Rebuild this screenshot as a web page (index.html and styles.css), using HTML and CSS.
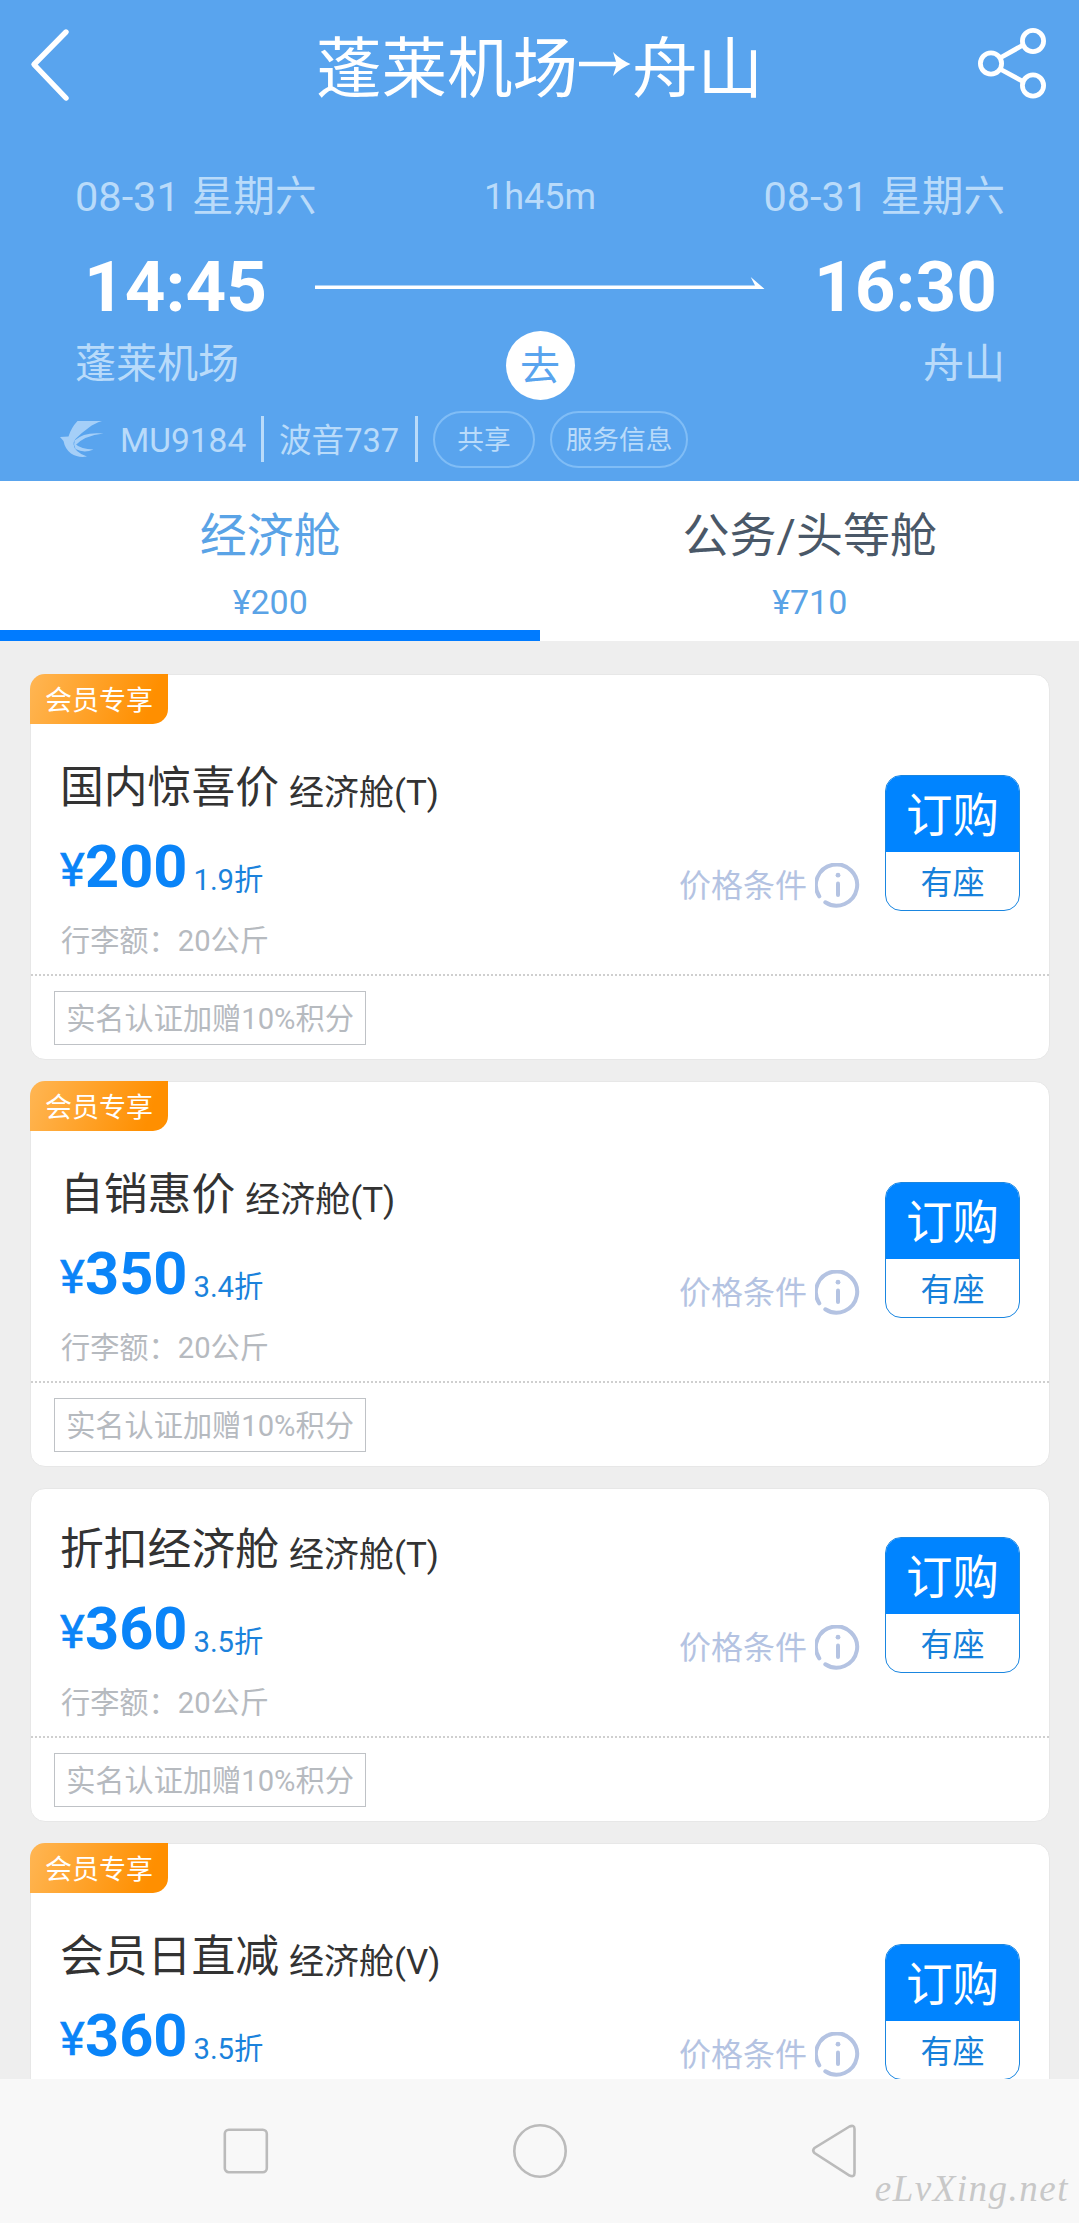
FILE: index.html
```html
<!DOCTYPE html>
<html lang="zh-CN">
<head>
<meta charset="utf-8">
<title>蓬莱机场→舟山</title>
<link rel="stylesheet" href="styles.css">
</head>
<body>
<svg class="defs" width="0" height="0">
  <symbol id="info" viewBox="0 0 46 46">
    <path d="M4.3 33.3A20.6 20.6 0 1 1 10.3 39.3" fill="none" stroke="currentColor" stroke-width="4" stroke-linecap="round"/>
    <circle cx="23" cy="12.2" r="2.4" fill="currentColor"/>
    <path d="M23 20.5V32" stroke="currentColor" stroke-width="4" stroke-linecap="round"/>
  </symbol>
</svg>
<div class="screen">
  <header class="header">
    <div class="topbar">
      <svg class="back" width="44" height="76" viewBox="0 0 44 76"><path d="M39 5L7 37.5L39 71" fill="none" stroke="#fff" stroke-width="5.4" stroke-linecap="round" stroke-linejoin="round"/></svg>
      <h1 class="title">蓬莱机场<svg class="arrow" width="54" height="24" viewBox="0 0 54 24"><path d="M1 9.800H38L35 0Q43 8 52.500 12Q43 16 35 24L38 14.200H1Z" fill="#fff"/></svg>舟山</h1>
      <svg class="share" width="70" height="76" viewBox="0 0 70 76" fill="none" stroke="#fff" stroke-width="4.8"><circle cx="14" cy="37.5" r="10.6"/><circle cx="56" cy="15" r="10.6"/><circle cx="56" cy="59.5" r="10.6"/><path d="M23 32L47 18.5M23 43L47 56"/></svg>
    </div>
    <div class="dates">
      <span class="date">08-31 星期六</span>
      <span class="duration">1h45m</span>
      <span class="date">08-31 星期六</span>
    </div>
    <div class="times">
      <span class="time">14:45</span>
      <svg class="route" width="450" height="14" viewBox="0 0 450 14"><path d="M0 8.4H440L435.7 0L449.5 12H0Z" fill="#fff"/></svg>
      <span class="time">16:30</span>
    </div>
    <div class="airports">
      <span>蓬莱机场</span>
      <span class="leg">去</span>
      <span class="to">舟山</span>
    </div>
    <div class="flight">
      <svg class="logo" width="46" height="38" viewBox="0 0 46 38" fill="#a5cff8"><path d="M17.500 1H42Q34 3.500 29 7.500Q22 12.500 17 17.500Q13.500 20.500 13.500 24Q14 32 27 36.500Q18 38 11 33.500Q5 29 3.500 21L0 17L8.500 16.500Q11 8 17.500 1Z"/><path d="M43.500 13.500Q24 11.500 14.500 20.500L14.500 26Q24 15.500 43.500 13.500Z"/><path d="M14 23Q21 29.500 33.500 29.500Q24 33.500 15.500 29Z"/></svg>
      <span class="number">MU9184</span>
      <i class="bar"></i>
      <span class="plane">波音737</span>
      <i class="bar"></i>
      <span class="pill">共享</span>
      <span class="pill pill-wide">服务信息</span>
    </div>
  </header>
  <nav class="tabs">
    <div class="tab active"><span class="tab-name">经济舱</span><span class="tab-price">¥200</span></div>
    <div class="tab"><span class="tab-name">公务/头等舱</span><span class="tab-price">¥710</span></div>
  </nav>
  <main class="list">
    <article class="card">
      <div class="badge">会员专享</div>
      <div class="fare">
        <div class="info">
          <div class="name">国内惊喜价<span class="cabin">经济舱(T)</span></div>
          <div class="price"><span class="yen">¥</span><b class="amount">200</b><span class="discount">1.9折</span></div>
          <div class="baggage">行李额：20公斤</div>
        </div>
        <div class="terms">价格条件<svg class="info-icon"><use href="#info"/></svg></div>
        <div class="buy"><span class="order">订购</span><span class="seats">有座</span></div>
      </div>
      <div class="extra"><span class="tag">实名认证加赠10%积分</span></div>
    </article>
    <article class="card">
      <div class="badge">会员专享</div>
      <div class="fare">
        <div class="info">
          <div class="name">自销惠价<span class="cabin">经济舱(T)</span></div>
          <div class="price"><span class="yen">¥</span><b class="amount">350</b><span class="discount">3.4折</span></div>
          <div class="baggage">行李额：20公斤</div>
        </div>
        <div class="terms">价格条件<svg class="info-icon"><use href="#info"/></svg></div>
        <div class="buy"><span class="order">订购</span><span class="seats">有座</span></div>
      </div>
      <div class="extra"><span class="tag">实名认证加赠10%积分</span></div>
    </article>
    <article class="card">
      <div class="fare">
        <div class="info">
          <div class="name">折扣经济舱<span class="cabin">经济舱(T)</span></div>
          <div class="price"><span class="yen">¥</span><b class="amount">360</b><span class="discount">3.5折</span></div>
          <div class="baggage">行李额：20公斤</div>
        </div>
        <div class="terms">价格条件<svg class="info-icon"><use href="#info"/></svg></div>
        <div class="buy"><span class="order">订购</span><span class="seats">有座</span></div>
      </div>
      <div class="extra"><span class="tag">实名认证加赠10%积分</span></div>
    </article>
    <article class="card">
      <div class="badge">会员专享</div>
      <div class="fare">
        <div class="info">
          <div class="name">会员日直减<span class="cabin">经济舱(V)</span></div>
          <div class="price"><span class="yen">¥</span><b class="amount">360</b><span class="discount">3.5折</span></div>
        </div>
        <div class="terms">价格条件<svg class="info-icon"><use href="#info"/></svg></div>
        <div class="buy"><span class="order">订购</span><span class="seats">有座</span></div>
      </div>
    </article>
  </main>
  <footer class="navbar">
    <svg width="46" height="56" viewBox="0 0 46 56"><rect x="1.8" y="6.8" width="42" height="42.4" rx="4" fill="none" stroke="#bbb" stroke-width="2.6"/></svg>
    <svg width="56" height="56" viewBox="0 0 56 56"><circle cx="28" cy="28" r="25.7" fill="none" stroke="#bbb" stroke-width="2.6"/></svg>
    <svg width="46" height="56" viewBox="0 0 46 56"><path d="M38.5 3.5L3.5 25Q1 27.500 3.500 30L38.500 52.500Q43.500 54.500 43.500 50V6Q43.500 1.500 38.500 3.500Z" fill="none" stroke="#bbb" stroke-width="2.6"/></svg>
    <span class="watermark">eLvXing.net</span>
  </footer>
</div>
</body>
</html>
```
FILE: styles.css
```css
* { box-sizing: border-box; }
body {
  margin: 0;
  font-family: Roboto, "Noto Sans CJK SC", sans-serif;
  background: #eee;
}
.defs { position: absolute; }
.screen {
  display: flex;
  flex-direction: column;
  width: 1079px;
  height: 2223px;
  overflow: hidden;
}
svg { display: block; flex: none; }

/* header */
.header {
  flex: none;
  height: 481px;
  background: #59a4ee;
  color: #b9dbfa;
  white-space: nowrap;
}
.topbar {
  display: flex;
  justify-content: space-between;
  align-items: center;
  height: 156px;
  padding: 0 36px 20px 27px;
}
.back { margin-top: -7px; }
.share { margin-top: -8px; margin-right: -4px; }
.title {
  margin: 4px 0 0 31px;
  font-size: 65.500px;
  font-weight: 400;
  line-height: 80px;
  color: #fff;
}
.arrow { display: inline-block; vertical-align: 16px; }
.dates {
  display: grid;
  grid-template-columns: 1fr 1fr 1fr;
  align-items: center;
  height: 82px;
  padding: 0 74px 0 75px;
  font-size: 41.500px;
  line-height: 82px;
  word-spacing: 2px;
}
.dates > :last-child { text-align: right; }
.duration { font-size: 36px; text-align: center; }
.times {
  display: flex;
  justify-content: space-between;
  align-items: center;
  height: 98px;
  padding: 0 82px 0 84px;
}
.time { font-size: 71px; line-height: 98px; font-weight: 700; color: #fff; }
.route { margin: -7px 1px 0 0; }
.airports {
  display: grid;
  grid-template-columns: 1fr 69px 1fr;
  align-items: center;
  height: 56px;
  padding: 0 74px 0 75px;
  font-size: 41px;
  line-height: 56px;
}
.to { text-align: right; }
.leg {
  height: 69px;
  margin: -5px 0 -8px;
  border-radius: 50%;
  background: #fff;
  color: #59a4ee;
  font-size: 40px;
  line-height: 72px;
  text-align: center;
}
.flight {
  display: flex;
  align-items: center;
  height: 94px;
  padding: 0 0 0 60px;
  font-size: 33.5px;
  line-height: 56px;
}
.number { margin-left: 14px; width: 141px; padding-top: 3px; }
.bar { width: 3px; height: 46px; background: #b9dbfa; }
.plane { margin-left: 15px; width: 136px; padding-top: 3px; font-size: 32.600px; }
.pill {
  height: 57px;
  width: 102px;
  margin-left: 15px;
  border: 2px solid #80bdf6;
  border-radius: 29px;
  font-size: 26.700px;
  line-height: 55px;
  text-align: center;
}
.pill-wide { width: 138px; }

/* cabin tabs */
.tabs { flex: none; display: flex; height: 160px; background: #fff; }
.tab {
  flex: 1;
  display: flex;
  flex-direction: column;
  align-items: center;
  padding: 20px 0 0 1px;
  color: #5aa3e6;
}
.tab.active { border-bottom: 11px solid #007bff; }
.tab-name { font-size: 47px; line-height: 70px; }
.tab:not(.active) .tab-name { color: #4a5868; }
.tab-price { font-size: 34px; line-height: 62px; }

/* fare cards */
.list {
  flex: 1;
  min-height: 0;
  overflow: hidden;
  display: flex;
  flex-direction: column;
  gap: 21px;
  padding: 33px 29px 0 30px;
}
.card {
  flex: none;
  border: 1px solid #e7e7e7;
  border-radius: 15px;
  background: #fff;
}
.badge {
  width: 138px;
  height: 50px;
  margin: -1px 0 3px -1px;
  border-radius: 15px 0 15px 0;
  background: linear-gradient(110deg, #ffb654, #ff8f00 85%);
  color: #fff;
  font-size: 27px;
  line-height: 54px;
  text-align: center;
}
.fare {
  display: flex;
  height: 247px;
  padding: 0 29px 0 30px;
}
.info { flex: 1; padding-top: 28px; white-space: nowrap; }
.name {
  display: flex;
  margin-left: -1px;
  font-size: 43.800px;
  line-height: 66px;
  color: #333;
}
.cabin { margin: 6px 0 0 10px; font-size: 35px; }
.price { display: flex; height: 72px; margin-top: 11px; color: #0a84f8; }
.yen { font-size: 47px; line-height: 68px; margin: -2px 0 0 -1px; width: 25px; -webkit-text-stroke: 0.600px #0a84f8; }
.amount { font-size: 59.500px; line-height: 60px; margin-top: -1px; }
.discount { margin: 22px 0 0 6px; font-size: 29.300px; line-height: 40px; color: #1a82dc; }
.baggage { margin-top: 1px; font-size: 29.200px; line-height: 60px; color: #b6babf; }
.terms {
  display: flex;
  align-items: center;
  height: 46px;
  margin-top: 136px;
  font-size: 32px;
  line-height: 47px;
  color: #b4c3e2;
}
.info-icon { width: 46px; height: 46px; margin-left: 8px; }
.buy {
  display: flex;
  flex-direction: column;
  width: 135px;
  height: 136px;
  margin: 48px 0 0 24px;
  border: 1.500px solid #1a86e0;
  border-radius: 16px;
  overflow: hidden;
  text-align: center;
  background: #fff;
}
.order { height: 76px; background: #0084ff; color: #fff; font-size: 46.500px; line-height: 80px; }
.seats { color: #1680da; font-size: 32px; line-height: 63px; }
.extra {
  height: 85px;
  padding: 15px 23px;
  border-top: 2px dotted #cfcfcf;
}
.tag {
  display: block;
  width: 312px;
  height: 54px;
  border: 1.500px solid #bfc2c6;
  color: #b6babf;
  font-size: 29.200px;
  line-height: 55px;
  text-align: center;
  white-space: nowrap;
}

/* system navigation bar */
.navbar {
  position: relative;
  flex: none;
  display: flex;
  justify-content: space-between;
  height: 144px;
  padding: 44px 222px 0 223px;
  background: #f8f8f8;
}
.watermark {
  position: absolute;
  right: 10px;
  bottom: 12px;
  font: italic 37px/44px "Liberation Serif", serif;
  letter-spacing: 1.500px;
  color: #c8c8c8;
}
```
